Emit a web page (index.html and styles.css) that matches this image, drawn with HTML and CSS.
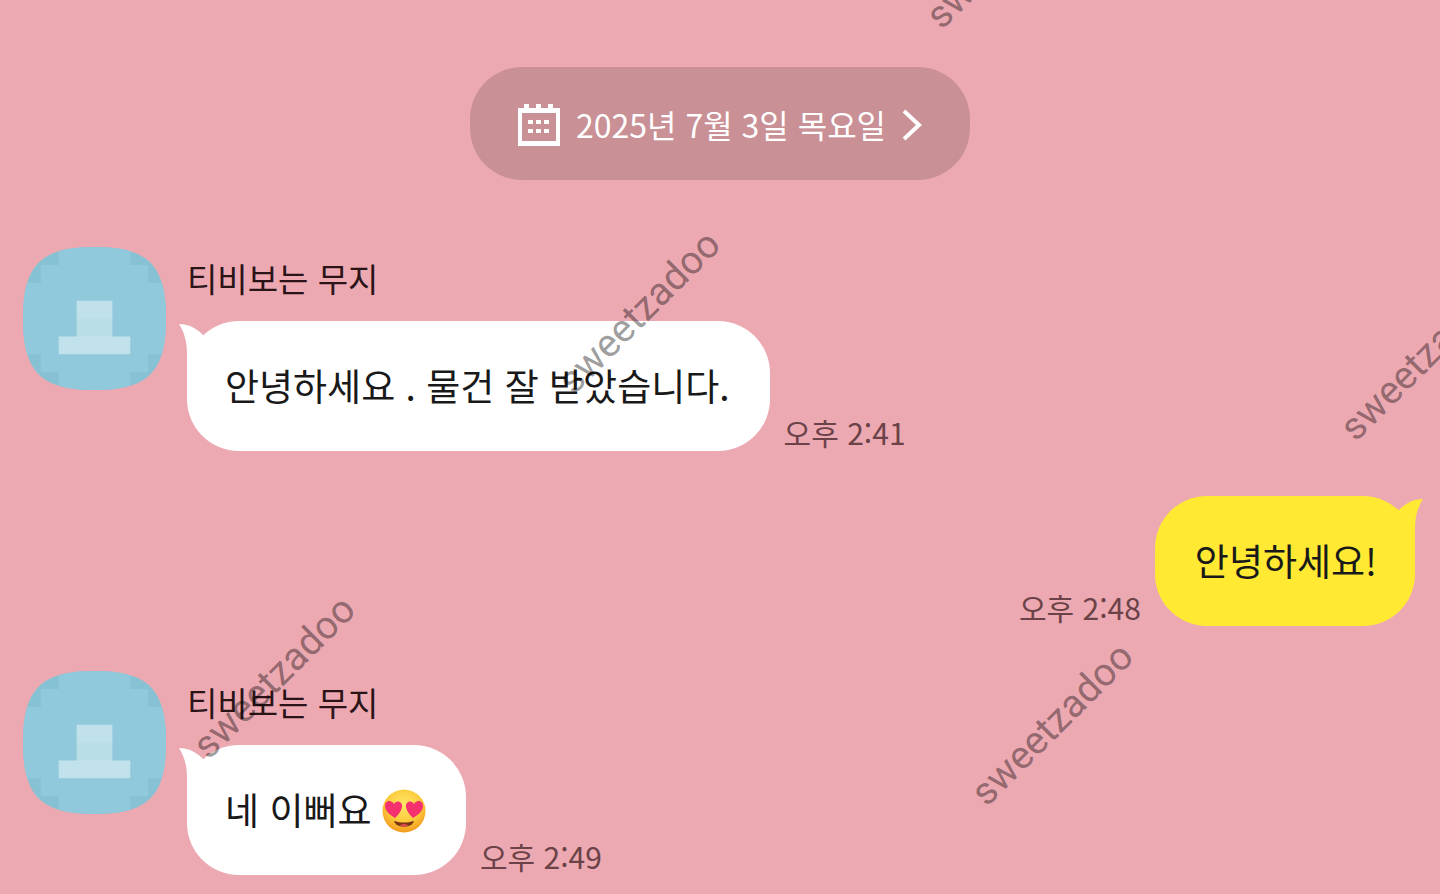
FILE: index.html
```html
<!DOCTYPE html>
<html lang="ko">
<head>
    <meta charset="UTF-8">
    <meta name="viewport" content="width=device-width, initial-scale=1.0">
    <title>티비보는 무지</title>
    <link rel="stylesheet" href="styles.css">
</head>
<body>
    <!-- shared shapes -->
    <svg class="defs" aria-hidden="true">
        <defs>
            <clipPath id="squircle">
                <path d="M72 0C126 0 144 18 144 72S126 144 72 144S0 126 0 72S18 0 72 0Z" />
            </clipPath>
            <symbol id="profile" viewBox="0 0 144 144">
                <g clip-path="url(#squircle)">
                    <rect width="144" height="144" fill="#86c2d3" />
                    <path d="M36 0H108V18H126V36H144V108H126V126H108V144H36V126H18V108H0V36H18V18H36Z" fill="#90c9dc" />
                    <path d="M54 54H90V73H54Z" fill="#c0e0eb" />
                    <path d="M54 72H90V91H54Z" fill="#b9dee7" />
                    <path d="M36 90H108V108H36Z" fill="#c1e1ec" />
                </g>
            </symbol>
            <symbol id="tail" viewBox="0 0 40 50">
                <path d="M0 0C9 0 17 4 23 10L40 30V50H8V30C8 17 5 8 0 0Z" fill="currentColor" />
            </symbol>
        </defs>
    </svg>

    <main class="chat">
        <button class="date" type="button">
            <svg class="date-icon" viewBox="0 0 42 42" aria-hidden="true">
                <path d="M0 4H6V0H11V4H18V0H23V4H30V0H35V4H42V42H0ZM4 9V37H38V9Z" fill="#fff" fill-rule="evenodd" />
                <path d="M10 16h5v4h-5zM18 16h5v4h-5zM26 16h5v4h-5zM10 25h5v4h-5zM18 25h5v4h-5zM26 25h5v4h-5z" fill="#fff" />
            </svg>
            <span>2025년 7월 3일 목요일</span>
            <svg class="date-arrow" viewBox="0 0 20 32" aria-hidden="true">
                <path d="M2 2L17 16L2 30" fill="none" stroke="#fff" stroke-width="4" />
            </svg>
        </button>

        <ol class="messages">
            <li class="message">
                <svg class="avatar" aria-hidden="true"><use href="#profile" /></svg>
                <div class="message-body">
                    <span class="name">티비보는 무지</span>
                    <div class="line">
                        <p class="bubble"><svg class="tail" aria-hidden="true"><use href="#tail" /></svg>안녕하세요 . 물건 잘 받았습니다.</p>
                        <time datetime="14:41">오후 2:41</time>
                    </div>
                </div>
            </li>
            <li class="message mine">
                <div class="line">
                    <time datetime="14:48">오후 2:48</time>
                    <p class="bubble"><svg class="tail" aria-hidden="true"><use href="#tail" /></svg>안녕하세요!</p>
                </div>
            </li>
            <li class="message">
                <svg class="avatar" aria-hidden="true"><use href="#profile" /></svg>
                <div class="message-body">
                    <span class="name">티비보는 무지</span>
                    <div class="line">
                        <p class="bubble"><svg class="tail" aria-hidden="true"><use href="#tail" /></svg>네 이뻐요 <svg class="emoji" viewBox="0 0 44 44" role="img" aria-label="😍">
                            <defs>
                                <radialGradient id="face" cx="50%" cy="35%" r="65%">
                                    <stop offset="0" stop-color="#ffe768" />
                                    <stop offset=".6" stop-color="#fccb3c" />
                                    <stop offset="1" stop-color="#f39a1c" />
                                </radialGradient>
                            </defs>
                            <circle cx="22" cy="22" r="21.5" fill="url(#face)" />
                            <path d="M13 32C18 34 26 34 31 32C32 32 32 33 31 34C28 39 16 39 13 34C12 33 12 32 13 32Z" fill="#7b3416" />
                            <path d="M18 36C20 35 24 35 26 36C24 38 20 38 18 36Z" fill="#ec4b55" />
                            <g fill="#f5306f">
                                <path d="M13 29C8 26 3 22 3 17C3 12 9 10 12 15C15 10 21 13 20 18C19 23 16 26 13 29Z" />
                                <path d="M31 29C36 26 41 22 41 17C41 12 35 10 32 15C29 10 23 13 24 18C25 23 28 26 31 29Z" />
                            </g>
                        </svg></p>
                        <time datetime="14:49">오후 2:49</time>
                    </div>
                </div>
            </li>
        </ol>

        <div class="watermarks">
            <span class="mark mark-1">sweetzadoo</span>
            <span class="mark mark-2">sweetzadoo</span>
            <span class="mark mark-3">sweetzadoo</span>
            <span class="mark mark-4">sweetzadoo</span>
            <span class="mark mark-5">sweetzadoo</span>
        </div>
    </main>
</body>
</html>
```
FILE: styles.css
```css
* {
    box-sizing: border-box;
}
body {
    margin: 0;
    background-color: #eda9b2;
    color: #191919;
    font-family: "Noto Sans CJK KR", sans-serif;
}
.defs {
    position: absolute;
    width: 0;
    height: 0;
}
.chat {
    position: relative;
    display: flex;
    flex-direction: column;
    align-items: center;
    min-height: 100vh;
    padding: 67px 0 16px;
    overflow: hidden;
}
/* date pill */
.date {
    display: flex;
    align-items: center;
    gap: 16px;
    margin: 0;
    padding: 33px 48px 31px;
    border: none;
    border-radius: 52px;
    background-color: #c99096;
    color: #fff;
    font-family: inherit;
    font-size: 32px;
    line-height: 49px;
    cursor: pointer;
}
.date-icon {
    width: 42px;
    height: 42px;
}
.date-arrow {
    width: 20px;
    height: 32px;
}
/* messages */
.messages {
    display: flex;
    flex-direction: column;
    gap: 45px;
    width: 100%;
    margin: 67px 0 0;
    padding: 0 25px 0 23px;
    list-style: none;
}
.message {
    display: flex;
    gap: 21px;
}
.avatar {
    flex: none;
    width: 143px;
    height: 143px;
}
.name {
    display: block;
    margin-bottom: 12px;
    color: #2b1418;
    font-size: 33px;
    line-height: 62px;
}
.line {
    display: flex;
    align-items: flex-end;
    gap: 14px;
}
.bubble {
    position: relative;
    margin: 0;
    padding: 39px 40px 41px 38px;
    border-radius: 52px;
    background-color: #fff;
    font-size: 37px;
    line-height: 50px;
}
.tail {
    position: absolute;
    top: 3px;
    left: -8px;
    width: 40px;
    height: 50px;
    color: #fff;
}
time {
    padding-bottom: 2px;
    color: #6b4248;
    font-size: 30px;
    line-height: 34px;
}
.mine {
    justify-content: flex-end;
}
.mine .bubble {
    padding-left: 40px;
    padding-right: 38px;
    background-color: #ffe933;
}
.mine .tail {
    right: -8px;
    left: auto;
    color: #ffe933;
    transform: scaleX(-1);
}
.emoji {
    width: 44px;
    height: 44px;
    vertical-align: -8px;
}
/* watermarks over the chat */
.watermarks {
    position: absolute;
    inset: 0;
    overflow: hidden;
    pointer-events: none;
}
.mark {
    position: absolute;
    color: rgba(0, 0, 0, .4);
    font-family: Roboto, sans-serif;
    font-size: 39px;
    line-height: 48px;
    transform: translate(-50%, -50%) rotate(-45deg);
}
.mark-1 {
    left: 1007px;
    top: -53px;
}
.mark-2 {
    left: 639px;
    top: 312px;
}
.mark-3 {
    left: 1421px;
    top: 359px;
}
.mark-4 {
    left: 274px;
    top: 677px;
}
.mark-5 {
    left: 1052px;
    top: 724px;
}
```
